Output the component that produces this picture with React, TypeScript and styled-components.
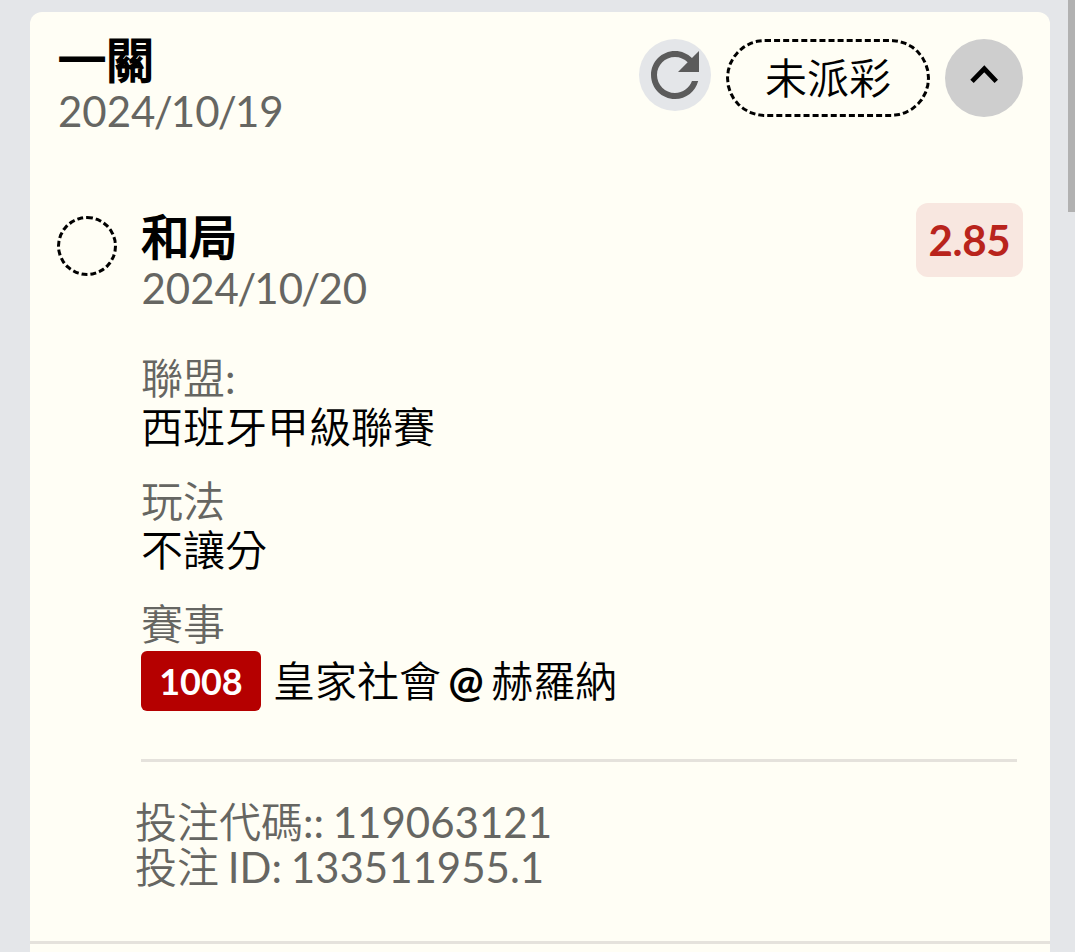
import styled, { createGlobalStyle } from 'styled-components';

const details = [
    { label: '聯盟:', value: '西班牙甲級聯賽' },
    { label: '玩法', value: '不讓分' },
];

function DateLabel({ value }: { value: string }) {
    const [year, month, day] = value.split('/');

    return (
        <DateText>
            {year}
            <span>/</span>
            {month}
            <span>/</span>
            {day}
        </DateText>
    );
}

function App() {
    return (
        <>
            <GlobalStyle />
            <Page>
                <Card>
                    <CardHeader>
                        <Heading>
                            <Title>一關</Title>
                            <DateLabel value='2024/10/19' />
                        </Heading>
                        <Actions>
                            <RefreshButton aria-label='refresh'>
                                <svg viewBox='0 0 24 24' width='72' height='72' fill='#5b5b5b'>
                                    <path d='M17.65 6.35C16.2 4.9 14.21 4 12 4c-4.42 0-7.99 3.58-7.99 8s3.57 8 7.99 8c3.73 0 6.84-2.55 7.73-6h-2.08c-.82 2.33-3.04 4-5.65 4-3.31 0-6-2.69-6-6s2.69-6 6-6c1.66 0 3.14.69 4.22 1.78L13 11h7V4z' />
                                </svg>
                            </RefreshButton>
                            <StatusPill>未派彩</StatusPill>
                            <ToggleButton aria-label='collapse'>
                                <svg viewBox='0 0 28 19' width='28' height='19' fill='none'>
                                    <path d='M2 16.4L14.3 3.8L26.3 16.4' stroke='#000' strokeWidth='4.8' />
                                </svg>
                            </ToggleButton>
                        </Actions>
                    </CardHeader>
                    <Bet>
                        <PendingMark />
                        <BetContent>
                            <BetHeader>
                                <Heading>
                                    <Title>和局</Title>
                                    <DateLabel value='2024/10/20' />
                                </Heading>
                                <Odds>2.85</Odds>
                            </BetHeader>
                            <DetailList>
                                {details.map((item) => (
                                    <div key={item.label}>
                                        <DetailLabel>{item.label}</DetailLabel>
                                        <DetailValue>{item.value}</DetailValue>
                                    </div>
                                ))}
                                <div>
                                    <DetailLabel>賽事</DetailLabel>
                                    <Match>
                                        <MatchCode>1008</MatchCode>
                                        <span>
                                            皇家社會 <b>@</b> 赫羅納
                                        </span>
                                    </Match>
                                </div>
                            </DetailList>
                        </BetContent>
                    </Bet>
                    <BetInfo>
                        <div>投注代碼:: 119063121</div>
                        <div>投注 ID: 133511955.1</div>
                    </BetInfo>
                    <CardFooter />
                </Card>
                <ScrollThumb />
            </Page>
        </>
    );
}

const GlobalStyle = createGlobalStyle`
    * {
        box-sizing: border-box;
    }

    body {
        margin: 0;
        overflow: hidden;
        background: #e4e6e9;
        font-family: Lato, 'Noto Sans CJK TC DemiLight', 'Noto Sans CJK TC', sans-serif;
        font-size: 42px;
        color: #000;
    }
`;

const Page = styled.div`
    position: relative;
    height: 952px;
    padding: 12px 25px 0 30px;
    overflow: hidden;
`;

const Card = styled.div`
    height: 960px;
    border-radius: 12px;
    background: #fffef5;
`;

const CardHeader = styled.div`
    display: flex;
    justify-content: space-between;
    height: 191px;
    padding: 27px 27px 0 28px;
`;

const Heading = styled.div`
    display: flex;
    flex-direction: column;
`;

const Title = styled.div`
    height: 47px;
    line-height: 42px;
    font-size: 48px;
    font-weight: 400;
    -webkit-text-stroke: 2px #000;
`;

const DateText = styled.div`
    line-height: 50px;
    color: #666662;

    span {
        margin: 0 -1.8px;
    }
`;

const Actions = styled.div`
    display: flex;
    align-items: flex-start;
    gap: 15px;
`;

const RefreshButton = styled.button`
    width: 72px;
    height: 72px;
    padding: 0;
    border: none;
    border-radius: 50%;
    background: #e4e6e9;
`;

const StatusPill = styled.div`
    width: 204px;
    height: 78px;
    border: 3px dashed #000;
    border-radius: 39px;
    line-height: 72px;
    text-align: center;
`;

const ToggleButton = styled.button`
    display: flex;
    justify-content: center;
    width: 78px;
    height: 78px;
    padding: 26px 0 0;
    border: none;
    border-radius: 50%;
    background: #cecece;
`;

const Bet = styled.div`
    display: flex;
    gap: 24px;
    padding: 0 27px;
`;

const PendingMark = styled.div`
    flex: none;
    width: 60px;
    height: 60px;
    margin-top: 13px;
    border: 3px dashed #000;
    border-radius: 50%;
`;

const BetContent = styled.div`
    flex: 1;
`;

const BetHeader = styled.div`
    display: flex;
    justify-content: space-between;
    height: 150px;

    ${Heading} {
        padding: 13px 0 0 0.5px;
    }
`;

const Odds = styled.div`
    width: 107px;
    height: 74px;
    border-radius: 12px;
    background: #f8e7e0;
    line-height: 74px;
    text-align: center;
    letter-spacing: -0.3px;
    font-weight: 700;
    color: #b9241c;
`;

const DetailList = styled.div`
    display: flex;
    flex-direction: column;
    gap: 25px;
    height: 409px;
    margin-right: 6px;
    border-bottom: 3px solid #e5e2dc;
`;

const DetailLabel = styled.div`
    line-height: 50px;
    color: #666662;
`;

const DetailValue = styled.div`
    line-height: 48px;
`;

const Match = styled.div`
    display: flex;
    align-items: center;
    gap: 12px;
    height: 60px;
    margin-top: 2px;
    line-height: 60px;
    word-spacing: -3.4px;
`;

const MatchCode = styled.div`
    width: 120px;
    height: 60px;
    border-radius: 6px;
    background: #b50000;
    text-align: center;
    font-size: 36px;
    font-weight: 700;
    color: #fff;
`;

const BetInfo = styled.div`
    height: 179px;
    padding: 38px 105px 0;
    line-height: 45px;
    word-spacing: -2px;
    color: #666662;
`;

const CardFooter = styled.div`
    border-top: 3px solid #e5e2dc;
`;

const ScrollThumb = styled.div`
    position: absolute;
    top: 0;
    right: 0;
    width: 7px;
    height: 212px;
    background: #b1b1b1;
`;

export default App;
